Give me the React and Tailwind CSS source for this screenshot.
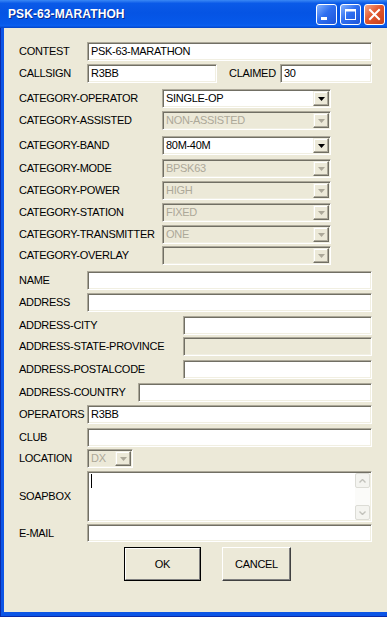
import React from "react";

const SUNKEN =
  "border border-t-[#aca899] border-l-[#aca899] border-r-white border-b-white shadow-[inset_1px_1px_0_#716f64,inset_-1px_-1px_0_#f1efe2]";

function Row({ className, labelW, label, children }) {
  return (
    <div className={`flex items-center ${className}`}>
      <div className={`${labelW} shrink-0 whitespace-nowrap`}>{label}</div>
      {children}
    </div>
  );
}

function Input({ value, className = "flex-1", disabled }) {
  return (
    <div
      className={`${className} h-full ${SUNKEN} ${
        disabled ? "bg-[#ECE9D8]" : "bg-white"
      } pl-[3px] flex items-center whitespace-nowrap`}
    >
      {value}
    </div>
  );
}

function DropBtn({ disabled }) {
  return (
    <div className="w-[16px] h-full shrink-0 border border-t-[#f1efe2] border-l-[#f1efe2] border-r-[#716f64] border-b-[#716f64] bg-[#ECE9D8] shadow-[inset_-1px_-1px_0_#aca899,inset_1px_1px_0_#ffffff] flex items-center justify-center">
      <svg width="7" height="4" viewBox="0 0 7 4">
        <path d="M0 0h7L3.5 4z" fill={disabled ? "#ACA899" : "#000"} />
      </svg>
    </div>
  );
}

function Select({ value, disabled, className = "w-[169px]" }) {
  return (
    <div
      className={`${className} h-full ${SUNKEN} pt-[1px] pl-[1px] pb-[1px] pr-[1px] flex ${
        disabled ? "bg-[#ECE9D8] text-[#ACA899]" : "bg-white text-black"
      }`}
    >
      <div className="flex-1 pl-[2px] flex items-center whitespace-nowrap overflow-hidden">
        {value}
      </div>
      <DropBtn disabled={disabled} />
    </div>
  );
}

function ScrollBtn({ up }) {
  return (
    <div className="w-[15px] h-[15px] rounded-[2px] border border-[#dcdcd6] bg-[#f4f4f0] flex items-center justify-center">
      <svg width="7" height="4" viewBox="0 0 7 4">
        <path
          d={up ? "M0.5 3.5L3.5 0.5L6.5 3.5" : "M0.5 0.5L3.5 3.5L6.5 0.5"}
          stroke="#c2c2bc"
          strokeWidth="1.4"
          fill="none"
        />
      </svg>
    </div>
  );
}

function TitleBtn({ children, red }) {
  return (
    <div
      className={`w-[21px] h-[21px] rounded-[3px] border border-white flex items-center justify-center ${
        red
          ? "bg-[linear-gradient(135deg,#f4a88a_0%,#e2572f_45%,#c8401a_100%)]"
          : "bg-[linear-gradient(135deg,#86b4ff_0%,#2f6ff0_45%,#1d55d9_100%)]"
      }`}
    >
      {children}
    </div>
  );
}

function TitleBar() {
  return (
    <div className="h-[28px] shrink-0 flex items-center justify-between pl-[8px] pr-[2px] bg-[linear-gradient(to_bottom,#3a88f5_0%,#0a5ae8_12%,#0554e4_45%,#0659ea_85%,#0a5ff0_92%,#0342c4_100%)]">
      <span className="text-white font-bold text-[12px] tracking-[0.1px] [text-shadow:1px_1px_0_#0a2a8a]">
        PSK-63-MARATHOH
      </span>
      <div className="flex gap-[3px] items-center">
        <TitleBtn>
          <svg width="19" height="19" viewBox="0 0 19 19">
            <rect x="4" y="12" width="6" height="3" fill="#fff" />
          </svg>
        </TitleBtn>
        <TitleBtn>
          <svg width="19" height="19" viewBox="0 0 19 19">
            <rect x="4.5" y="4.5" width="10" height="10" stroke="#fff" strokeWidth="1" fill="none" />
            <rect x="4" y="4" width="11" height="2.5" fill="#fff" />
          </svg>
        </TitleBtn>
        <TitleBtn red>
          <svg width="19" height="19" viewBox="0 0 19 19">
            <path d="M5 5L14 14M14 5L5 14" stroke="#fff" strokeWidth="2" strokeLinecap="square" />
          </svg>
        </TitleBtn>
      </div>
    </div>
  );
}

export default function App() {
  return (
    <div className="w-[387px] h-[617px] flex flex-col overflow-hidden font-[family-name:Liberation_Sans,Arial,sans-serif] bg-[#0c55e6]">
      <TitleBar />
      <div className="flex-1 flex border-l border-b border-[#0a2aa8]">
        <div className="flex-1 ml-[3px] mb-[4px] bg-[#ECE9D8] pl-[15px] pr-[15px] pt-[14px] flex flex-col text-[11px] tracking-[-0.3px] text-black leading-none">
          <Row className="h-[19px]" labelW="w-[68px]" label="CONTEST">
            <Input value="PSK-63-MARATHON" />
          </Row>
          <Row className="mt-[3px] h-[19px]" labelW="w-[68px]" label="CALLSIGN">
            <Input value="R3BB" className="w-[130px]" />
            <div className="ml-[12px] w-[51px] shrink-0 whitespace-nowrap">CLAIMED</div>
            <Input value="30" />
          </Row>
          <Row className="mt-[6px] h-[19px]" labelW="w-[143px]" label="CATEGORY-OPERATOR">
            <Select value="SINGLE-OP" />
          </Row>
          <Row className="mt-[3px] h-[19px]" labelW="w-[143px]" label="CATEGORY-ASSISTED">
            <Select value="NON-ASSISTED" disabled />
          </Row>
          <Row className="mt-[6px] h-[19px]" labelW="w-[143px]" label="CATEGORY-BAND">
            <Select value="80M-40M" />
          </Row>
          <Row className="mt-[4px] h-[19px]" labelW="w-[143px]" label="CATEGORY-MODE">
            <Select value="BPSK63" disabled />
          </Row>
          <Row className="mt-[3px] h-[19px]" labelW="w-[143px]" label="CATEGORY-POWER">
            <Select value="HIGH" disabled />
          </Row>
          <Row className="mt-[3px] h-[19px]" labelW="w-[143px]" label="CATEGORY-STATION">
            <Select value="FIXED" disabled />
          </Row>
          <Row className="mt-[3px] h-[19px]" labelW="w-[143px]" label="CATEGORY-TRANSMITTER">
            <Select value="ONE" disabled />
          </Row>
          <Row className="mt-[2px] h-[19px]" labelW="w-[143px]" label="CATEGORY-OVERLAY">
            <Select value="" disabled />
          </Row>
          <Row className="mt-[6px] h-[19px]" labelW="w-[68px]" label="NAME">
            <Input value="" />
          </Row>
          <Row className="mt-[3px] h-[19px]" labelW="w-[68px]" label="ADDRESS">
            <Input value="" />
          </Row>
          <Row className="mt-[4px] h-[19px]" labelW="w-[164px]" label="ADDRESS-CITY">
            <Input value="" />
          </Row>
          <Row className="mt-[2px] h-[19px]" labelW="w-[164px]" label="ADDRESS-STATE-PROVINCE">
            <Input value="" disabled />
          </Row>
          <Row className="mt-[4px] h-[19px]" labelW="w-[164px]" label="ADDRESS-POSTALCODE">
            <Input value="" />
          </Row>
          <Row className="mt-[4px] h-[19px]" labelW="w-[119px]" label="ADDRESS-COUNTRY">
            <Input value="" />
          </Row>
          <Row className="mt-[3px] h-[19px]" labelW="w-[68px]" label="OPERATORS">
            <Input value="R3BB" />
          </Row>
          <Row className="mt-[4px] h-[19px]" labelW="w-[68px]" label="CLUB">
            <Input value="" />
          </Row>
          <Row className="mt-[2px] h-[19px]" labelW="w-[68px]" label="LOCATION">
            <Select value="DX" disabled className="w-[46px]" />
          </Row>
          <Row className="mt-[3px] h-[51px]" labelW="w-[68px]" label="SOAPBOX">
            <div className={`flex-1 h-full bg-white ${SUNKEN} flex pt-[1px] pb-[1px] pr-[1px]`}>
              <div className="flex-1">
                <div className="w-px h-[14px] bg-black mt-[1px] ml-[3px]" />
              </div>
              <div className="w-[15px] h-full flex flex-col justify-between bg-[#fbfbf9]">
                <ScrollBtn up />
                <ScrollBtn />
              </div>
            </div>
          </Row>
          <Row className="mt-[2px] h-[18px]" labelW="w-[68px]" label="E-MAIL">
            <Input value="" />
          </Row>
          <div className="mt-[5px] h-[34px] flex ml-[105px] gap-[21px]">
            <div className="w-[77px] h-full border border-black">
              <div className="w-full h-full border border-t-white border-l-white border-r-[#808080] border-b-[#808080] bg-[#ECE9D8] flex items-center justify-center">
                OK
              </div>
            </div>
            <div className="w-[69px] h-full border border-t-white border-l-white border-r-[#404040] border-b-[#404040] shadow-[inset_-1px_-1px_0_#808080] bg-[#ECE9D8] flex items-center justify-center">
              CANCEL
            </div>
          </div>
        </div>
      </div>
    </div>
  );
}
